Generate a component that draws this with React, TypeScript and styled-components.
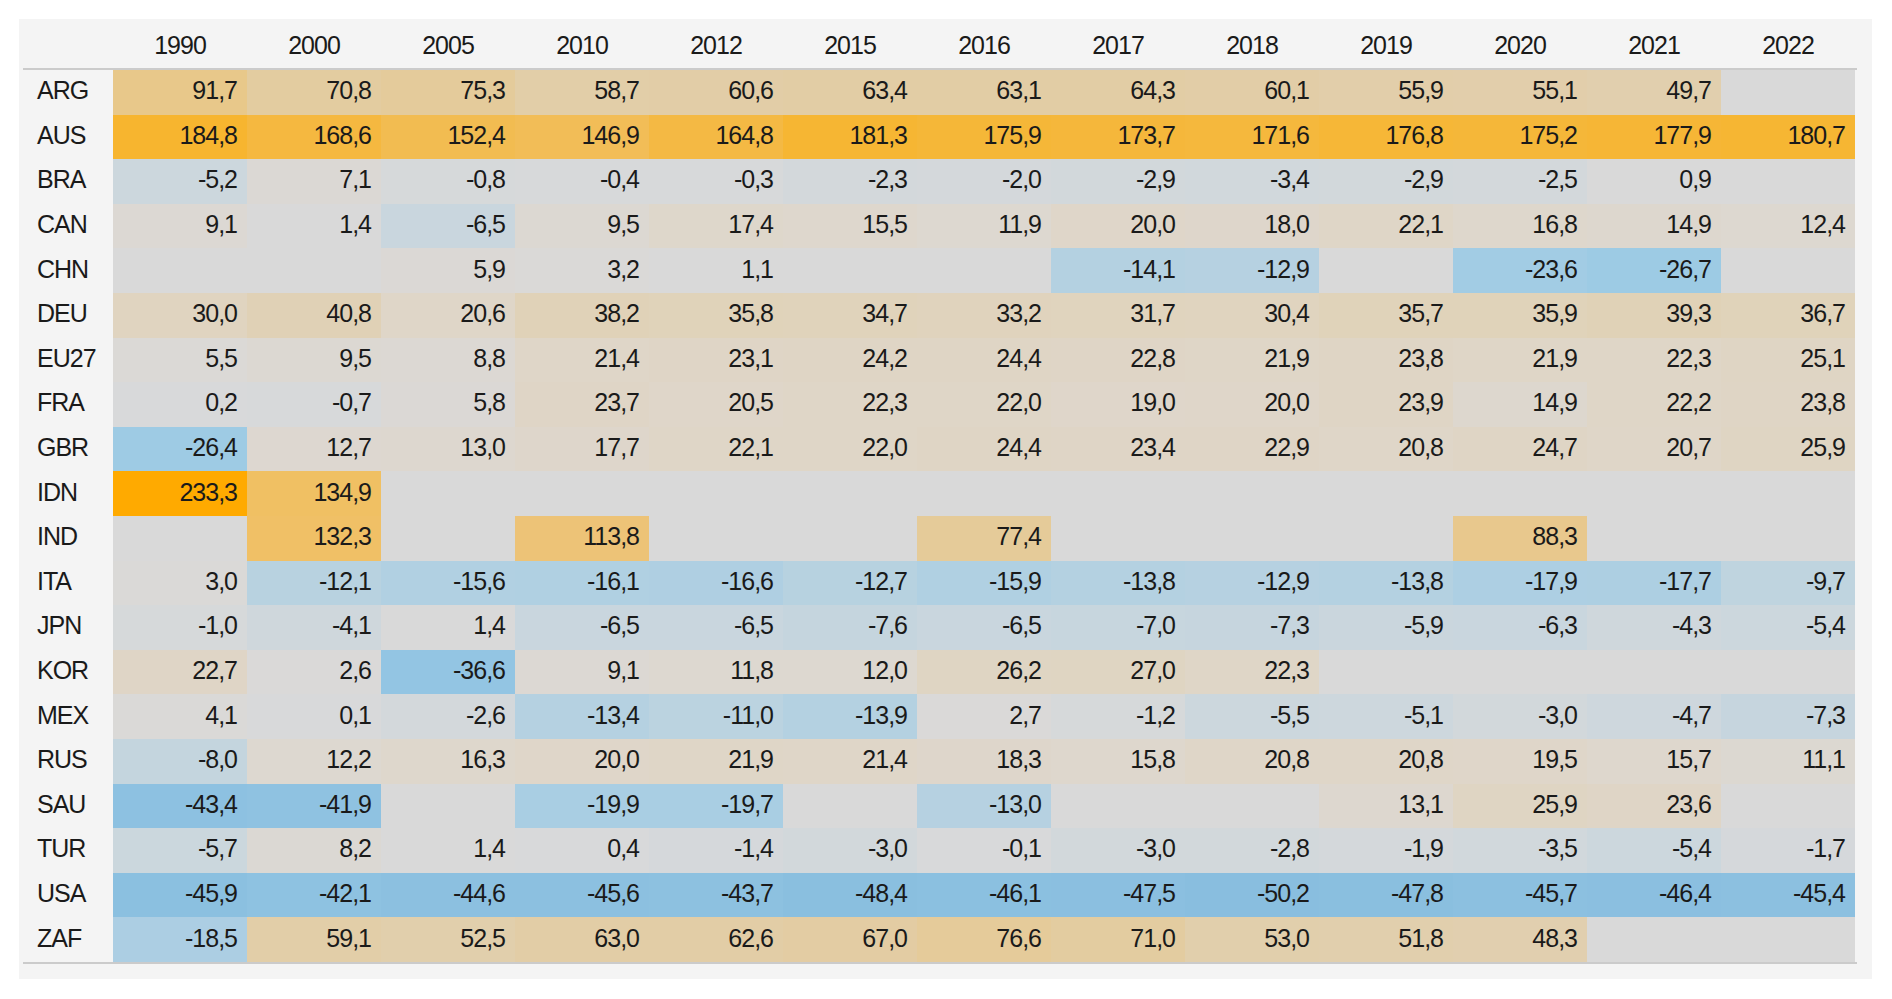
import React from "react";
import styled, { createGlobalStyle } from "styled-components";

const GlobalStyle = createGlobalStyle`
  html, body { margin: 0; padding: 0; background: #ffffff; }
  body { font-family: "Liberation Sans", Arial, sans-serif; }
`;

const YEARS = ["1990", "2000", "2005", "2010", "2012", "2015", "2016", "2017", "2018", "2019", "2020", "2021", "2022"];

type Row = { code: string; values: (number | null)[] };

const _ = null;
const DATA: Row[] = [
  { code: "ARG", values: [91.7, 70.8, 75.3, 58.7, 60.6, 63.4, 63.1, 64.3, 60.1, 55.9, 55.1, 49.7, _] },
  { code: "AUS", values: [184.8, 168.6, 152.4, 146.9, 164.8, 181.3, 175.9, 173.7, 171.6, 176.8, 175.2, 177.9, 180.7] },
  { code: "BRA", values: [-5.2, 7.1, -0.8, -0.4, -0.3, -2.3, -2.0, -2.9, -3.4, -2.9, -2.5, 0.9, _] },
  { code: "CAN", values: [9.1, 1.4, -6.5, 9.5, 17.4, 15.5, 11.9, 20.0, 18.0, 22.1, 16.8, 14.9, 12.4] },
  { code: "CHN", values: [_, _, 5.9, 3.2, 1.1, _, _, -14.1, -12.9, _, -23.6, -26.7, _] },
  { code: "DEU", values: [30.0, 40.8, 20.6, 38.2, 35.8, 34.7, 33.2, 31.7, 30.4, 35.7, 35.9, 39.3, 36.7] },
  { code: "EU27", values: [5.5, 9.5, 8.8, 21.4, 23.1, 24.2, 24.4, 22.8, 21.9, 23.8, 21.9, 22.3, 25.1] },
  { code: "FRA", values: [0.2, -0.7, 5.8, 23.7, 20.5, 22.3, 22.0, 19.0, 20.0, 23.9, 14.9, 22.2, 23.8] },
  { code: "GBR", values: [-26.4, 12.7, 13.0, 17.7, 22.1, 22.0, 24.4, 23.4, 22.9, 20.8, 24.7, 20.7, 25.9] },
  { code: "IDN", values: [233.3, 134.9, _, _, _, _, _, _, _, _, _, _, _] },
  { code: "IND", values: [_, 132.3, _, 113.8, _, _, 77.4, _, _, _, 88.3, _, _] },
  { code: "ITA", values: [3.0, -12.1, -15.6, -16.1, -16.6, -12.7, -15.9, -13.8, -12.9, -13.8, -17.9, -17.7, -9.7] },
  { code: "JPN", values: [-1.0, -4.1, 1.4, -6.5, -6.5, -7.6, -6.5, -7.0, -7.3, -5.9, -6.3, -4.3, -5.4] },
  { code: "KOR", values: [22.7, 2.6, -36.6, 9.1, 11.8, 12.0, 26.2, 27.0, 22.3, _, _, _, _] },
  { code: "MEX", values: [4.1, 0.1, -2.6, -13.4, -11.0, -13.9, 2.7, -1.2, -5.5, -5.1, -3.0, -4.7, -7.3] },
  { code: "RUS", values: [-8.0, 12.2, 16.3, 20.0, 21.9, 21.4, 18.3, 15.8, 20.8, 20.8, 19.5, 15.7, 11.1] },
  { code: "SAU", values: [-43.4, -41.9, _, -19.9, -19.7, _, -13.0, _, _, 13.1, 25.9, 23.6, _] },
  { code: "TUR", values: [-5.7, 8.2, 1.4, 0.4, -1.4, -3.0, -0.1, -3.0, -2.8, -1.9, -3.5, -5.4, -1.7] },
  { code: "USA", values: [-45.9, -42.1, -44.6, -45.6, -43.7, -48.4, -46.1, -47.5, -50.2, -47.8, -45.7, -46.4, -45.4] },
  { code: "ZAF", values: [-18.5, 59.1, 52.5, 63.0, 62.6, 67.0, 76.6, 71.0, 53.0, 51.8, 48.3, _, _] },
];

const STOPS: [number, string][] = [
  [-50.2, "#89bedf"],
  [-45, "#8cc0e0"],
  [-36.6, "#93c5e3"],
  [-26, "#9ecbe4"],
  [-15, "#b2d0e2"],
  [-12, "#b8d2e0"],
  [-5, "#cdd7dd"],
  [-2.5, "#d3d8db"],
  [0, "#d8d9da"],
  [1, "#d9d9d9"],
  [10, "#dcd8d2"],
  [20, "#dfd6c9"],
  [35, "#e0d3bb"],
  [50, "#e1cfae"],
  [70, "#e3cca1"],
  [90, "#e8c88b"],
  [115, "#edc376"],
  [134, "#f0c064"],
  [180, "#f6b634"],
  [233.3, "#ffaa00"],
];

const hex = (h: string) => [1, 3, 5].map((i) => parseInt(h.slice(i, i + 2), 16));

function colorFor(v: number | null): string {
  if (v === null) return "#d9d9d9";
  if (v <= STOPS[0][0]) return STOPS[0][1];
  for (let i = 1; i < STOPS.length; i++) {
    const [v1, c1] = STOPS[i];
    if (v <= v1) {
      const [v0, c0] = STOPS[i - 1];
      const t = (v - v0) / (v1 - v0);
      const a = hex(c0);
      const b = hex(c1);
      const m = a.map((x, k) => Math.round(x + (b[k] - x) * t));
      return `rgb(${m[0]}, ${m[1]}, ${m[2]})`;
    }
  }
  return STOPS[STOPS.length - 1][1];
}

const fmt = (v: number | null) => (v === null ? "" : v.toFixed(1).replace(".", ","));

const Page = styled.div`
  padding: 19px 0 0 19px;
`;

const Panel = styled.div`
  width: 1853px;
  height: 960px;
  box-sizing: border-box;
  background: #f4f4f4;
  padding: 0 15px 15px 4px;
`;

const Table = styled.div`
  width: 1834px;
  border-bottom: 2px solid #cbcbcb;
`;

const HeaderRow = styled.div`
  display: grid;
  grid-template-columns: 90px repeat(13, 134px);
  height: 49px;
  border-bottom: 2px solid #cbcbcb;
`;

const YearCell = styled.div`
  display: flex;
  align-items: center;
  justify-content: center;
  font-size: 25px;
  letter-spacing: -1px;
  color: #1a1a1a;
  padding-top: 3px;
`;

const DataRow = styled.div`
  display: grid;
  grid-template-columns: 90px repeat(13, 134px);
  height: 44.6px;
`;

const Label = styled.div`
  display: flex;
  align-items: center;
  padding-left: 14px;
  padding-bottom: 3px;
  font-size: 25px;
  letter-spacing: -1px;
  color: #1a1a1a;
`;

const ValueCell = styled.div<{ $bg: string }>`
  display: flex;
  align-items: center;
  justify-content: flex-end;
  padding-right: 10px;
  padding-bottom: 3px;
  background: ${(p) => p.$bg};
  font-size: 25px;
  letter-spacing: -1px;
  color: #1a1a1a;
`;

export default function App() {
  return (
    <>
      <GlobalStyle />
      <Page>
        <Panel>
          <Table>
            <HeaderRow>
              <div />
              {YEARS.map((y) => (
                <YearCell key={y}>{y}</YearCell>
              ))}
            </HeaderRow>
            {DATA.map((r) => (
              <DataRow key={r.code}>
                <Label>{r.code}</Label>
                {r.values.map((v, i) => (
                  <ValueCell key={i} $bg={colorFor(v)}>
                    {fmt(v)}
                  </ValueCell>
                ))}
              </DataRow>
            ))}
          </Table>
        </Panel>
      </Page>
    </>
  );
}
